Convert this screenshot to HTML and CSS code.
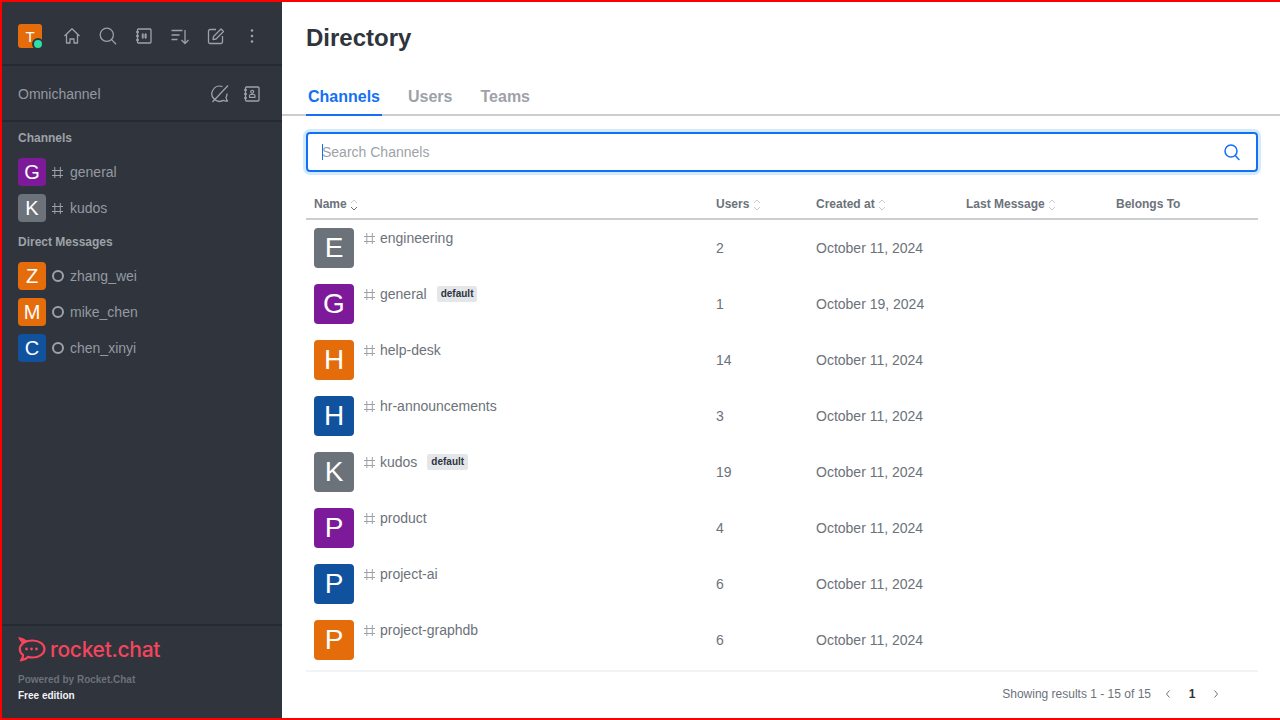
FILE: index.html
```html
<!DOCTYPE html>
<html lang="en">
<head>
<meta charset="utf-8">
<title>Directory</title>
<link rel="stylesheet" href="styles.css">
</head>
<body>
<svg class="sprite" aria-hidden="true">
  <symbol id="hash" viewBox="0 0 11 11"><path d="M2.800 0v11M8.300 0v11M0 3.500h11M0 8.500h11"/></symbol>
  <symbol id="sort" viewBox="0 0 8 12"><path d="M1 4l3-3 3 3M1 8l3 3 3-3"/></symbol>
  <symbol id="sorted" viewBox="0 0 8 12"><path d="M1 4l3-3 3 3"/><path stroke="#6c727a" d="M1 8l3 3 3-3"/></symbol>
</svg>
<div class="app">
  <aside class="sidebar">
    <div class="topbar">
      <div class="me avatar a24 orange">T<span class="dot"></span></div>
      <div class="tools">
        <button class="tool"><svg class="ic" width="18" height="18" viewBox="0 0 18 18"><path d="M1.500 9L9 1.800 16.500 9M3.500 7.500V16h3.500v-4h4v4h3.500V7.500"/></svg></button>
        <button class="tool"><svg class="ic" width="18" height="18" viewBox="0 0 18 18"><circle cx="7.800" cy="7.800" r="6.600"/><path d="M12.600 12.600l4.400 4.600"/></svg></button>
        <button class="tool"><svg class="ic" width="18" height="18" viewBox="0 0 18 18"><rect x="2.500" y="2" width="13.500" height="14" rx="1"/><path d="M1 5h3M1 9h3M1 13h3"/><path class="thin" d="M7.800 6.300v5.400M10.700 6.300v5.400M6.500 8h5.500M6.500 10h5.500"/></svg></button>
        <button class="tool"><svg class="ic" width="18" height="18" viewBox="0 0 18 18"><path d="M.5 3.500h11M.5 8h8M.5 12.500h6M14 3v13.500M10.500 13l3.500 3.500 3.500-3.500"/></svg></button>
        <button class="tool"><svg class="ic" width="18" height="18" viewBox="0 0 18 18"><path d="M15.500 9v6a1.500 1.500 0 0 1-1.500 1.500H3A1.500 1.500 0 0 1 1.500 15V4A1.500 1.500 0 0 1 3 2.500h6"/><path d="M6 12.500l.5-3L14 2l2.500 2.500L9 12z"/></svg></button>
        <button class="tool"><svg class="kebab" width="18" height="18" viewBox="0 0 18 18"><circle cx="9" cy="3.500" r="1.300"/><circle cx="9" cy="9" r="1.300"/><circle cx="9" cy="14.500" r="1.300"/></svg></button>
      </div>
    </div>
    <div class="omni">
      <span class="omni-label">Omnichannel</span>
      <div class="tools">
        <button class="tool small"><svg class="ic" width="18" height="18" viewBox="0 0 18 18"><path d="M16 8.500a7.500 7.500 0 0 1-1 4c.2 1.500.8 2.700 1.500 3.500-2 .3-3.200 0-4.500-.6A7.500 7.500 0 0 1 2.300 4.500 7.500 7.500 0 0 1 11.500 1.700M17 .5L1.500 17"/></svg></button>
        <button class="tool small"><svg class="ic" width="18" height="18" viewBox="0 0 18 18"><rect x="2.500" y="2" width="13.500" height="14" rx="1"/><path d="M1 5h3M1 9h3M1 13h3"/><circle class="thin" cx="9.200" cy="6.800" r="1.500"/><path class="thin" d="M6.500 12.300v-1.600c0-.6.500-1.200 1.200-1.200h3c.700 0 1.300.6 1.300 1.200v1.600z"/></svg></button>
      </div>
    </div>
    <h2 class="section">Channels</h2>
    <ul class="rooms">
      <li class="room"><span class="avatar a28 purple">G</span><svg class="hash" width="11" height="11"><use href="#hash"/></svg><span>general</span></li>
      <li class="room"><span class="avatar a28 gray">K</span><svg class="hash" width="11" height="11"><use href="#hash"/></svg><span>kudos</span></li>
    </ul>
    <h2 class="section">Direct Messages</h2>
    <ul class="rooms">
      <li class="room"><span class="avatar a28 orange">Z</span><span class="offline"></span><span>zhang_wei</span></li>
      <li class="room"><span class="avatar a28 orange">M</span><span class="offline"></span><span>mike_chen</span></li>
      <li class="room"><span class="avatar a28 blue">C</span><span class="offline"></span><span>chen_xinyi</span></li>
    </ul>
    <footer class="side-foot">
      <div class="logo">
        <svg width="28" height="26" viewBox="0 0 28 26"><path class="logo-line" d="M6 5.500C8.500 4 11.500 3.500 14.500 3.500c6.500 0 12 3.500 12 8.500s-5.500 8.500-12 8.500c-1.500 0-3-.2-4.300-.6-1.700 1.700-4 3.300-7.200 3.500 1.200-1.500 2.300-3.300 2-5.500C3 16.500 1.800 14.500 1.800 12c0-2.300 1.200-4.200 3-5.700"/><path class="logo-fill" d="M0 0c3.500.3 7 1.800 9 3.800L5.500 7.500C3.500 6 1.500 3.500 0 0z"/><circle class="logo-fill" cx="8.500" cy="12" r="1.400"/><circle class="logo-fill" cx="13.500" cy="12" r="1.400"/><circle class="logo-fill" cx="18.500" cy="12" r="1.400"/></svg>
        <span class="wordmark">rocket.chat</span>
      </div>
      <p class="powered">Powered by Rocket.Chat</p>
      <p class="edition">Free edition</p>
    </footer>
  </aside>
  <main class="main">
    <h1 class="title">Directory</h1>
    <nav class="tabs">
      <a class="tab active">Channels</a>
      <a class="tab">Users</a>
      <a class="tab">Teams</a>
    </nav>
    <section class="content">
      <div class="search">
        <span class="caret"></span>
        <input class="search-input" placeholder="Search Channels">
        <svg class="search-ic" width="18" height="18" viewBox="0 0 18 18"><circle cx="8" cy="8" r="6"/><path d="M12.300 12.500l4 4.500"/></svg>
      </div>
      <div class="table-wrap">
        <table class="table">
          <colgroup><col class="c-name"><col class="c-users"><col class="c-date"><col class="c-date"><col class="c-date"></colgroup>
          <thead>
            <tr>
              <th>Name <svg class="sorter" width="8" height="12"><use href="#sorted"/></svg></th>
              <th>Users <svg class="sorter" width="8" height="12"><use href="#sort"/></svg></th>
              <th>Created at <svg class="sorter" width="8" height="12"><use href="#sort"/></svg></th>
              <th>Last Message <svg class="sorter" width="8" height="12"><use href="#sort"/></svg></th>
              <th>Belongs To</th>
            </tr>
          </thead>
          <tbody>
            <tr><td><div class="cell"><span class="avatar a40 gray">E</span><span class="nm"><svg class="hash" width="11" height="11"><use href="#hash"/></svg>engineering</span></div></td><td>2</td><td>October 11, 2024</td><td></td><td></td></tr>
            <tr><td><div class="cell"><span class="avatar a40 purple">G</span><span class="nm"><svg class="hash" width="11" height="11"><use href="#hash"/></svg>general<span class="badge">default</span></span></div></td><td>1</td><td>October 19, 2024</td><td></td><td></td></tr>
            <tr><td><div class="cell"><span class="avatar a40 orange">H</span><span class="nm"><svg class="hash" width="11" height="11"><use href="#hash"/></svg>help-desk</span></div></td><td>14</td><td>October 11, 2024</td><td></td><td></td></tr>
            <tr><td><div class="cell"><span class="avatar a40 blue">H</span><span class="nm"><svg class="hash" width="11" height="11"><use href="#hash"/></svg>hr-announcements</span></div></td><td>3</td><td>October 11, 2024</td><td></td><td></td></tr>
            <tr><td><div class="cell"><span class="avatar a40 gray">K</span><span class="nm"><svg class="hash" width="11" height="11"><use href="#hash"/></svg>kudos<span class="badge">default</span></span></div></td><td>19</td><td>October 11, 2024</td><td></td><td></td></tr>
            <tr><td><div class="cell"><span class="avatar a40 purple">P</span><span class="nm"><svg class="hash" width="11" height="11"><use href="#hash"/></svg>product</span></div></td><td>4</td><td>October 11, 2024</td><td></td><td></td></tr>
            <tr><td><div class="cell"><span class="avatar a40 blue">P</span><span class="nm"><svg class="hash" width="11" height="11"><use href="#hash"/></svg>project-ai</span></div></td><td>6</td><td>October 11, 2024</td><td></td><td></td></tr>
            <tr><td><div class="cell"><span class="avatar a40 orange">P</span><span class="nm"><svg class="hash" width="11" height="11"><use href="#hash"/></svg>project-graphdb</span></div></td><td>6</td><td>October 11, 2024</td><td></td><td></td></tr>
          </tbody>
        </table>
      </div>
      <div class="pager">
        <span class="results">Showing results 1 - 15 of 15</span>
        <span class="page"><svg width="8" height="10" viewBox="0 0 8 10"><path d="M5.500 1.500L2.500 5l3 3.500"/></svg></span>
        <span class="page current">1</span>
        <span class="page"><svg width="8" height="10" viewBox="0 0 8 10"><path d="M2.500 1.500L5.500 5l-3 3.500"/></svg></span>
      </div>
    </section>
  </main>
</div>
</body>
</html>
```
FILE: styles.css
```css
* { box-sizing: border-box; }
html, body { margin: 0; height: 720px; overflow: hidden; background: #fff; }
body { font-family: "Liberation Sans", Arial, sans-serif; font-size: 14px; color: #6c727a; }
.sprite { display: none; }
p, h1, h2, ul { margin: 0; padding: 0; }
ul { list-style: none; }

.app { display: flex; height: 720px; border: solid #ff0000; border-width: 2px 0 2px 2px; }

.sidebar { width: 280px; flex: none; display: flex; flex-direction: column; background: #2f343d; color: #959aa1; }
.topbar { height: 64px; flex: none; display: flex; align-items: center; justify-content: space-between; padding: 6px 12px 0 16px; border-bottom: 2px solid #262a31; }
.tools { display: flex; }
.tool { width: 36px; height: 36px; padding: 0; border: 0; background: none; display: flex; align-items: center; justify-content: center; }
.tool.small { width: 32px; height: 32px; }
.ic { fill: none; stroke: #9ea2a8; stroke-width: 1.300; stroke-linejoin: round; }
.ic .thin { stroke-width: 1.200; }
.kebab { fill: #9ea2a8; }

.avatar { display: flex; flex: none; align-items: center; justify-content: center; color: #fff; border-radius: 4px; }
.a24 { width: 24px; height: 24px; font-size: 15px; border-radius: 3px; }
.a28 { width: 28px; height: 28px; font-size: 20px; }
.a40 { width: 40px; height: 40px; font-size: 28px; }
.orange { background: #e56c0b; }
.purple { background: #7d1a9a; }
.gray { background: #6c727a; }
.blue { background: #10529e; }
.me { position: relative; }
.dot { position: absolute; right: -2px; bottom: -2px; width: 12px; height: 12px; border-radius: 50%; background: #2de0a5; border: 2px solid #2f343d; }

.omni { height: 56px; flex: none; display: flex; align-items: center; justify-content: space-between; padding: 2px 14px 0 16px; border-bottom: 2px solid #262a31; }
.omni-label { font-size: 14px; }
.section { height: 32px; line-height: 32px; padding-left: 16px; font-size: 12px; font-weight: 700; color: #9ea2a8; }
.room { height: 36px; display: flex; align-items: center; padding-left: 16px; font-size: 14px; }
.room .hash { margin: 0 7px 0 6px; }
.hash { flex: none; fill: none; stroke: #9ea2a8; stroke-width: 1; }
.offline { width: 12px; height: 12px; margin: 0 6px; border-radius: 50%; border: 2px solid #9ea2a8; flex: none; }

.side-foot { margin-top: auto; height: 94px; flex: none; border-top: 2px solid #262a31; padding: 10px 16px 0; }
.logo { display: flex; align-items: center; gap: 4px; height: 28px; }
.logo-line { fill: none; stroke: #f5455c; stroke-width: 2.200; stroke-linejoin: round; }
.logo-fill { fill: #f5455c; }
.wordmark { font-family: Inter, sans-serif; font-size: 21px; font-weight: 500; color: #f5455c; letter-spacing: -.3px; line-height: 24px; }
.powered { margin-top: 8px; font-size: 10px; line-height: 16px; font-weight: 700; color: #6c727a; }
.edition { font-size: 10px; line-height: 16px; font-weight: 700; color: #f2f3f5; }

.main { flex: 1; min-width: 0; display: flex; flex-direction: column; }
.title { height: 72px; flex: none; padding-left: 24px; font-size: 24px; line-height: 72px; font-weight: 700; color: #2f343d; }
.tabs { height: 42px; flex: none; display: flex; align-items: flex-start; gap: 24px; padding: 2px 0 0 24px; border-bottom: 2px solid #cbced1; }
.tab { height: 40px; padding: 2px 2px 0; display: flex; align-items: center; font-size: 16px; font-weight: 700; color: #9ea2a8; border-bottom: 2px solid transparent; border-top: 2px solid transparent; }
.tab.active { color: #156ff5; border-bottom-color: #156ff5; }

.content { flex: 1; min-height: 0; display: flex; flex-direction: column; padding: 16px 22px 0 24px; }
.search { height: 40px; flex: none; display: flex; align-items: center; padding: 0 15px 0 14px; border: 2px solid #156ff5; border-radius: 4px; box-shadow: 0 0 0 3px #d1ebfe; }
.caret { width: 1px; height: 16px; background: #156ff5; flex: none; }
.search-input { flex: 1; min-width: 0; border: 0; outline: 0; padding: 0; margin-left: -1px; font: 14px "Liberation Sans", Arial, sans-serif; background: none; }
.search-input::placeholder { color: #9ea2a8; opacity: 1; }
.search-ic { fill: none; stroke: #156ff5; stroke-width: 1.500; flex: none; }

.table-wrap { height: 480px; flex: none; margin-top: 18px; overflow: hidden; }
.table { width: 100%; table-layout: fixed; border-collapse: separate; border-spacing: 0; }
.c-name { width: 402px; }
.c-users { width: 100px; }
.c-date { width: 150px; }
.table th { height: 30px; padding: 0 8px; border-bottom: 2px solid #cbced1; text-align: left; font-size: 12px; font-weight: 700; color: #6c727a; white-space: nowrap; }
.table td { height: 56px; padding: 0 8px; font-size: 14px; color: #6c727a; }
.sorter { vertical-align: -3px; fill: none; stroke: #cbced1; stroke-width: 1; }
.cell { display: flex; gap: 10px; }
.nm { display: flex; align-items: center; height: 20px; }
.nm .hash { margin-right: 5px; }
.badge { margin-left: 10px; height: 16px; line-height: 15px; padding: 0 4px; border-radius: 2px; background: #e4e7ea; color: #2f343d; font-size: 10px; font-weight: 700; }

.pager { height: 48px; flex: none; display: flex; align-items: center; justify-content: flex-end; padding: 0 30px 2px 0; border-top: 2px solid #f2f3f5; font-size: 12px; }
.results { margin-right: 5px; }
.page { width: 24px; height: 24px; display: flex; align-items: center; justify-content: center; }
.page svg { fill: none; stroke: #6c727a; stroke-width: 1; }
.current { font-weight: 700; color: #2f343d; }
```
